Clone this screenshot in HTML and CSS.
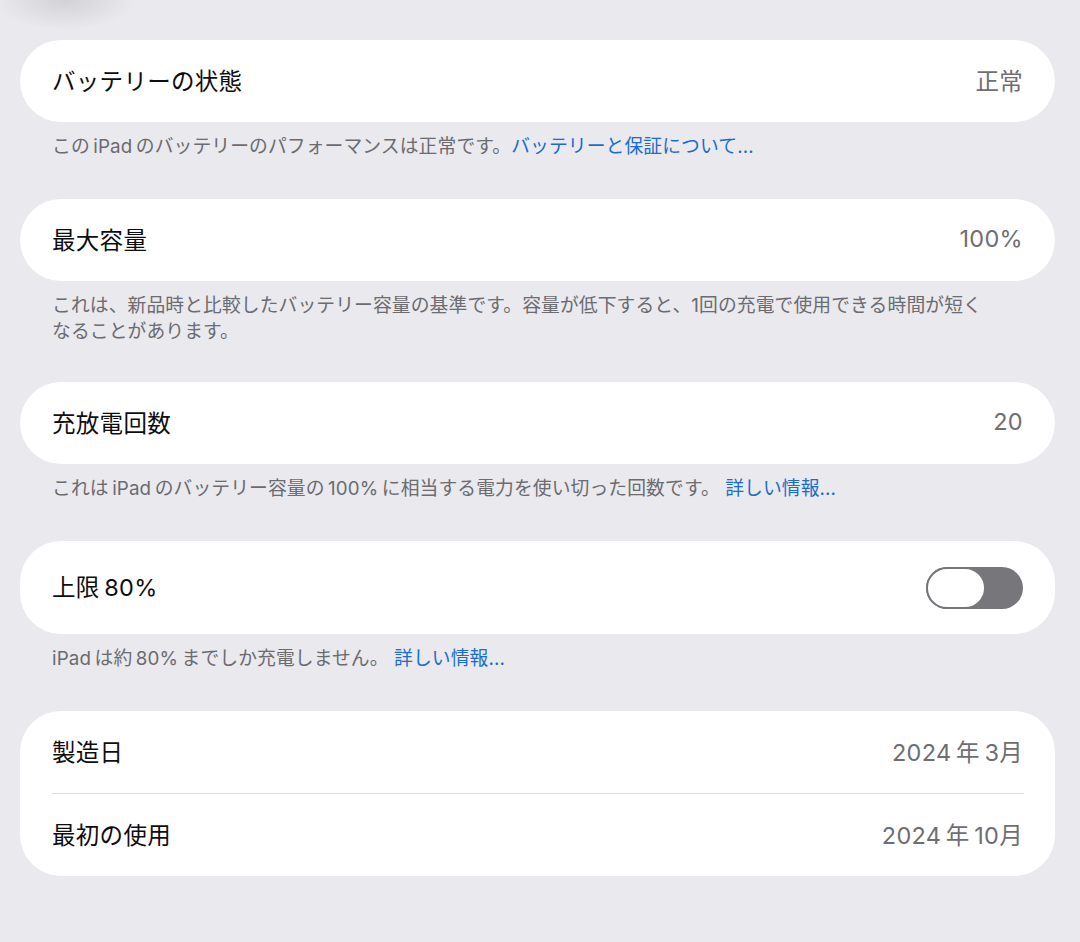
FILE: index.html
```html
<!DOCTYPE html>
<html lang="ja">
<head>
<meta charset="utf-8">
<title>バッテリー</title>
<link rel="stylesheet" href="styles.css">
</head>
<body>
<main class="page">
  <section class="card">
    <div class="row"><span class="label">バッテリーの状態</span><span class="value">正常</span></div>
  </section>
  <p class="footer">この&thinsp;iPad&thinsp;のバッテリーのパフォーマンスは正常です。<a class="link">バッテリーと保証について...</a></p>

  <section class="card">
    <div class="row"><span class="label">最大容量</span><span class="value">100%</span></div>
  </section>
  <p class="footer footer-2">これは、新品時と比較したバッテリー容量の基準です。容量が低下すると、1回の充電で使用できる時間が短く<br>なることがあります。</p>

  <section class="card">
    <div class="row"><span class="label">充放電回数</span><span class="value">20</span></div>
  </section>
  <p class="footer">これは&thinsp;iPad&thinsp;のバッテリー容量の&thinsp;100%&thinsp;に相当する電力を使い切った回数です。 <a class="link">詳しい情報...</a></p>

  <section class="card">
    <div class="row row-toggle"><span class="label">上限&thinsp;80%</span><span class="toggle"><span class="knob"></span></span></div>
  </section>
  <p class="footer">iPad&thinsp;は約&thinsp;80%&thinsp;までしか充電しません。 <a class="link">詳しい情報...</a></p>

  <section class="card">
    <div class="row"><span class="label">製造日</span><span class="value">2024&thinsp;年&thinsp;3月</span></div>
    <div class="sep"></div>
    <div class="row"><span class="label">最初の使用</span><span class="value">2024&thinsp;年&thinsp;10月</span></div>
  </section>
</main>
</body>
</html>
```
FILE: styles.css
```css
html, body {
  margin: 0;
  padding: 0;
}
body {
  width: 1080px;
  height: 942px;
  overflow: hidden;
  background-color: #e9e9ee;
  background-image: radial-gradient(ellipse 70px 30px at 65px 0px, rgba(190,190,196,0.55), rgba(233,233,238,0));
  font-family: "Inter", "Noto Sans CJK JP", sans-serif;
  color: #1c1c1e;
}
.page {
  padding: 40px 25px 0 20px;
}
.card {
  background: #ffffff;
  border-radius: 41px;
  overflow: hidden;
}
.row {
  height: 82px;
  padding: 0 32px;
  display: flex;
  align-items: center;
  justify-content: space-between;
}
.row-toggle {
  height: 93px;
}
.label {
  font-size: 23.5px;
  font-weight: 400;
  color: #0e0e10;
  letter-spacing: 0.3px;
  margin-top: -3px;
}
.value {
  font-size: 23.5px;
  color: #6e6e73;
  letter-spacing: 0.3px;
  margin-top: -3px;
}
.sep {
  height: 1px;
  background: #dcdce0;
  margin: 0 31px 0 32px;
}
.footer {
  margin: 12px 0 39px;
  padding: 0 32px;
  font-size: 18.8px;
  line-height: 26px;
  color: #6b6b70;
  letter-spacing: 0.1px;
}
.footer-2 {
  margin-bottom: 37px;
}
.link {
  color: #1a6dcc;
}
.toggle {
  width: 97px;
  height: 42px;
  border-radius: 21px;
  background: #77767b;
  display: flex;
  align-items: center;
}
.knob {
  width: 60px;
  height: 42px;
  box-sizing: border-box;
  border-radius: 21px;
  background: #ffffff;
  border: 2.5px solid #77767b;
}
```
